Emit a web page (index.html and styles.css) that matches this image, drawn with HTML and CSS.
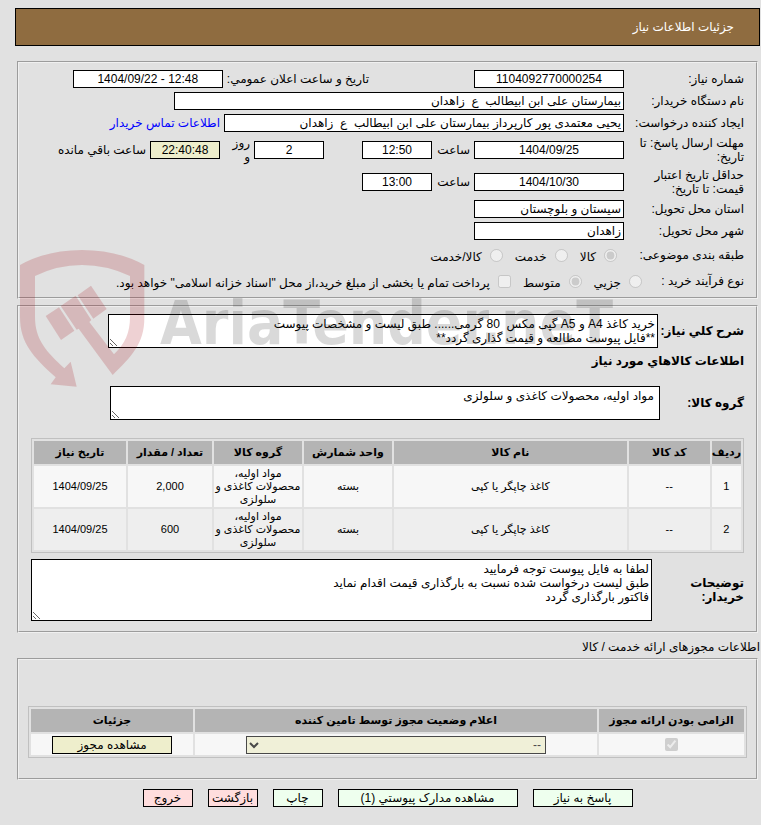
FILE: index.html
```html
<!DOCTYPE html>
<html lang="fa" dir="rtl">
<head>
  <meta charset="UTF-8">
  <meta name="viewport" content="width=device-width, initial-scale=1.0">
  <title>جزئیات اطلاعات نیاز</title>
  <link rel="stylesheet" href="styles.css">
</head>
<body>
  <div class="page">
    <h1 class="page-title">جزئیات اطلاعات نیاز</h1>

    <form>
      <!-- General information -->
      <fieldset class="box info">
        <div class="row">
          <label class="caption" for="needNo">شماره نیاز:</label>
          <input class="num w150" type="text" id="needNo" value="1104092770000254" readonly>
          <label class="second" for="announceDate">تاریخ و ساعت اعلان عمومي:</label>
          <input class="num w150" type="text" id="announceDate" dir="ltr" value="1404/09/22 - 12:48" readonly>
        </div>
        <div class="row">
          <label class="caption" for="buyer">نام دستگاه خریدار:</label>
          <input class="w450" type="text" id="buyer" value="بیمارستان علی ابن ابیطالب  ع  زاهدان" readonly>
        </div>
        <div class="row">
          <label class="caption" for="creator">ایجاد کننده درخواست:</label>
          <input class="w400" type="text" id="creator" value="یحیی معتمدی پور کارپرداز بیمارستان علی ابن ابیطالب  ع  زاهدان" readonly>
          <a href="#contact">اطلاعات تماس خریدار</a>
        </div>
        <div class="row tall">
          <label class="caption" for="replyDate">مهلت ارسال پاسخ: تا تاریخ:</label>
          <input class="num w150" type="text" id="replyDate" value="1404/09/25" readonly>
          <label class="short" for="replyTime">ساعت</label>
          <input class="num w70" type="text" id="replyTime" value="12:50" readonly>
          <input class="num w70 days" type="text" id="daysLeft" value="2" readonly>
          <label class="unit" for="daysLeft">روز و</label>
          <input class="num w70 timer" type="text" id="timeLeft" value="22:40:48" readonly>
          <label for="timeLeft">ساعت باقي مانده</label>
        </div>
        <div class="row tall">
          <label class="caption" for="validDate">حداقل تاریخ اعتبار قیمت: تا تاریخ:</label>
          <input class="num w150" type="text" id="validDate" value="1404/10/30" readonly>
          <label class="short" for="validTime">ساعت</label>
          <input class="num w70" type="text" id="validTime" value="13:00" readonly>
        </div>
        <div class="row">
          <label class="caption" for="province">استان محل تحویل:</label>
          <input class="w150" type="text" id="province" value="سیستان و بلوچستان" readonly>
        </div>
        <div class="row">
          <label class="caption" for="city">شهر محل تحویل:</label>
          <input class="w150" type="text" id="city" value="زاهدان" readonly>
        </div>
        <div class="row options">
          <span class="caption">طبقه بندی موضوعی:</span>
          <label class="choice"><input type="radio" name="subject" checked disabled><span>کالا</span></label>
          <label class="choice"><input type="radio" name="subject" disabled><span>خدمت</span></label>
          <label class="choice"><input type="radio" name="subject" disabled><span>کالا/خدمت</span></label>
        </div>
        <div class="row options process">
          <span class="caption">نوع فرآیند خرید :</span>
          <label class="choice"><input type="radio" name="process" disabled><span>جزیي</span></label>
          <label class="choice"><input type="radio" name="process" checked disabled><span>متوسط</span></label>
          <label class="choice treasury"><input type="checkbox" name="treasury" disabled><span>پرداخت تمام یا بخشی از مبلغ خرید،از محل "اسناد خزانه اسلامی" خواهد بود.</span></label>
        </div>
      </fieldset>

      <!-- Requested goods -->
      <fieldset class="box goods">
        <div class="area-row">
          <label for="summary">شرح کلي نیاز:</label>
          <textarea class="w550" id="summary" rows="2" readonly>خرید کاغذ A4 و A5 گپی مکس  80 گرمی...... طبق لیست و مشخصات پیوست
**فایل پیوست مطالعه و قیمت گذاری گردد**</textarea>
        </div>
        <h2 class="sub-title">اطلاعات کالاهاي مورد نیاز</h2>
        <div class="area-row group">
          <label for="group">گروه کالا:</label>
          <textarea class="w550" id="group" rows="2" readonly>مواد اولیه، محصولات کاغذی و سلولزی</textarea>
        </div>

        <table class="grid items">
          <colgroup>
            <col class="c-row"><col class="c-code"><col class="c-name"><col class="c-unit"><col class="c-group"><col class="c-qty"><col class="c-date">
          </colgroup>
          <thead>
            <tr>
              <th>ردیف</th>
              <th>کد کالا</th>
              <th>نام کالا</th>
              <th>واحد شمارش</th>
              <th>گروه کالا</th>
              <th>تعداد / مقدار</th>
              <th>تاریخ نیاز</th>
            </tr>
          </thead>
          <tbody>
            <tr>
              <td>1</td>
              <td>--</td>
              <td>کاغذ چاپگر یا کپی</td>
              <td>بسته</td>
              <td>مواد اولیه، محصولات کاغذی و سلولزی</td>
              <td>2,000</td>
              <td>1404/09/25</td>
            </tr>
            <tr>
              <td>2</td>
              <td>--</td>
              <td>کاغذ چاپگر یا کپی</td>
              <td>بسته</td>
              <td>مواد اولیه، محصولات کاغذی و سلولزی</td>
              <td>600</td>
              <td>1404/09/25</td>
            </tr>
          </tbody>
        </table>

        <div class="area-row notes">
          <label for="notes">توضیحات خریدار:</label>
          <textarea id="notes" rows="4" readonly>لطفا به فایل پیوست توجه فرمایید
طبق لیست درخواست شده نسبت به بارگذاری قیمت اقدام نماید
فاکتور بارگذاری گردد</textarea>
        </div>
      </fieldset>

      <!-- Permits -->
      <p class="section-title">اطلاعات مجوزهای ارائه خدمت / کالا</p>
      <fieldset class="box permits">
        <table class="grid">
          <colgroup>
            <col class="c-required"><col class="c-status"><col class="c-details">
          </colgroup>
          <thead>
            <tr>
              <th>الزامی بودن ارائه مجوز</th>
              <th>اعلام وضعیت مجوز توسط تامین کننده</th>
              <th>جزئیات</th>
            </tr>
          </thead>
          <tbody>
            <tr>
              <td><input type="checkbox" aria-label="الزامی بودن ارائه مجوز" checked disabled></td>
              <td>
                <select aria-label="اعلام وضعیت مجوز" disabled>
                  <option>--</option>
                </select>
              </td>
              <td><button class="btn view" type="button">مشاهده مجوز</button></td>
            </tr>
          </tbody>
        </table>
      </fieldset>

      <div class="actions">
        <button class="btn green w100" type="button">پاسخ به نیاز</button>
        <button class="btn green w180" type="button">مشاهده مدارک پیوستي (1)</button>
        <button class="btn green" type="button">چاپ</button>
        <button class="btn red" type="button">بازگشت</button>
        <button class="btn red" type="button">خروج</button>
      </div>
    </form>

    <div class="watermark" dir="ltr">
      <svg width="150" height="155" viewBox="0 0 450 465" aria-hidden="true">
        <path d="M30 75 Q110 30 216 30 Q322 30 403 75 V235 C403 310 365 350 308 405 L206 266 L200 269 L152 198 L197 167 L244 240 L238 246 L312 343 C345 310 360 280 360 230 V108 Q290 75 216 75 Q142 75 75 108 V230 C75 300 110 335 163 385 L182 365 L200 440 L122 433 L137 412 C70 350 30 310 30 230 Z"/>
        <path d="M107 228 L147 202 L193 272 L153 300 Z"/>
        <path d="M203 166 L243 137 L290 207 L250 236 Z"/>
      </svg>
      <span>AriaTender.neT</span>
    </div>
  </div>
</body>
</html>
```
FILE: styles.css
```css
* {
  box-sizing: border-box;
}

body {
  margin: 0;
  background-color: #e1e1e1;
  color: #000;
  font-family: "Liberation Sans", "DejaVu Sans", sans-serif;
  font-size: 12px;
  line-height: 14px;
}

.page {
  position: relative;
  padding: 8px 1px 8px 15px;
}

.page-title {
  margin: 0 0 15px;
  padding: 10px 25px;
  border: 1px solid #000;
  background-color: #8f6c40;
  color: #fff;
  font-size: 12px;
  font-weight: normal;
  line-height: 16px;
}

.box {
  min-width: 0;
  margin: 0 2px;
  border: 2px groove #f0f0f0;
}

input,
textarea,
select,
button {
  margin: 0;
  font-family: inherit;
  font-size: 12px;
  line-height: 14px;
}

/* form rows */

.info {
  padding: 5px 12px 3px;
  margin-bottom: 6px;
}

.row {
  display: flex;
  align-items: center;
  gap: 4px;
  min-height: 22px;
}

.row.tall {
  min-height: 32px;
}

.row.options {
  min-height: 26px;
}

.caption {
  flex: none;
  width: 116px;
}

input[type="text"] {
  height: 18px;
  padding: 1px 2px;
  border: 1px solid #000;
  background-color: #fff;
  color: #000;
}

.num {
  text-align: center;
}

.w70 { width: 70px; }
.w150 { width: 150px; }
.w400 { width: 400px; }
.w450 { width: 450px; }

.second {
  margin-right: 101px;
}

.short {
  width: 34px;
}

.days {
  margin-right: 34px;
}

.unit {
  width: 26px;
}

input.timer {
  background-color: #eeeecc;
}

a {
  color: #00f;
  text-decoration: none;
}

.options {
  gap: 12px;
}

.options .caption {
  width: 115px;
}

.process .caption {
  width: 90px;
}

.choice {
  display: flex;
  align-items: center;
  gap: 8px;
}

.choice input {
  width: 13px;
  height: 13px;
}

.choice span {
  padding-top: 4px;
}

/* goods */

.goods {
  padding: 7px 12px 10px;
}

.area-row {
  display: flex;
  align-items: center;
  font-weight: bold;
}

.area-row label {
  flex: none;
  width: 86px;
}

textarea {
  display: block;
  padding: 2px;
  border: 1px solid #000;
  background-color: #fff;
  color: #000;
  resize: both;
}

.w550 {
  width: 550px;
}

.sub-title {
  margin: 6px 0 18px;
  font-size: 12px;
  line-height: 14px;
}

.group label {
  width: 84px;
}

.group textarea {
  padding: 2px 5px;
}

.notes label {
  width: 92px;
  padding-left: 16px;
}

.notes textarea {
  flex: 1;
}

/* tables */

.grid {
  width: 100%;
  border: 1px solid #c0c0c0;
  border-spacing: 2px;
  table-layout: fixed;
  font-size: 11px;
  line-height: 13px;
  text-align: center;
}

.grid th {
  height: 23px;
  padding: 1px 0;
  background-color: #b4b4b4;
}

.grid td {
  padding: 1px;
  background-color: #f7f7f7;
}

.grid tbody tr:nth-child(even) td {
  background-color: #eee;
}

.items {
  margin: 18px 0 6px;
}

.c-row { width: 26px; }
.c-code { width: 81px; }
.c-unit { width: 88px; }
.c-group { width: 88px; }
.c-qty { width: 84px; }
.c-date { width: 92px; }

.goods .items {
  width: auto;
  min-width: 100%;
}

/* permits */

.section-title {
  margin: 0;
  padding: 7px 0 4px;
}

.permits {
  padding: 46px 9px 20px;
}

.c-required { width: 145px; }
.c-details { width: 162px; }

.permits td {
  height: 21px;
}

.permits td input {
  display: block;
  width: 13px;
  height: 13px;
  margin: 0 auto;
}

select {
  display: block;
  width: 300px;
  max-width: 100%;
  height: 18px;
  margin: 0 auto;
  padding: 0;
  border: 1px solid #000;
  background-color: #eeeecc;
  color: #000;
}

/* buttons */

.btn {
  width: 50px;
  height: 18px;
  padding: 0;
  border: 1px solid #000;
  color: #000;
  white-space: nowrap;
  cursor: pointer;
}

.view {
  display: block;
  width: 120px;
  margin: 0 auto;
  background-color: #eeeecc;
}

.green { background-color: #efe; }
.red { background-color: #fdd; }
.w100 { width: 100px; }
.w180 { width: 180px; }

.actions {
  display: flex;
  justify-content: center;
  gap: 15px;
  padding-top: 9px;
}

/* watermark over the form */

.watermark {
  position: absolute;
  top: 240px;
  left: 10px;
  display: flex;
  align-items: center;
  pointer-events: none;
}

.watermark path {
  fill: rgba(160, 0, 10, 0.18);
}

.watermark span {
  padding-top: 10px;
  color: rgba(30, 30, 30, 0.17);
  font-family: "DejaVu Sans Condensed", sans-serif;
  font-size: 60px;
  font-weight: bold;
  line-height: 80px;
}
```
